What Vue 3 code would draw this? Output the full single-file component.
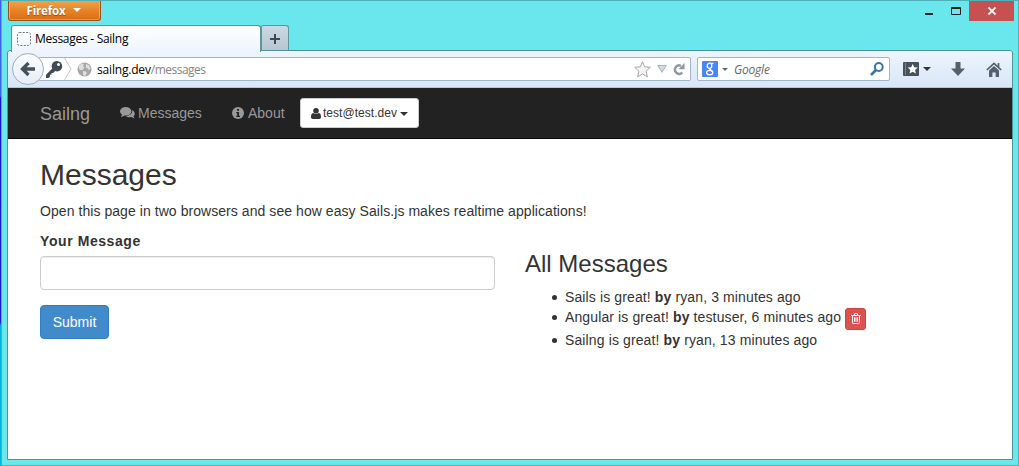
<script setup>
import { ref } from 'vue'

const draft = ref('')
const messages = [
  { text: 'Sails is great!', user: 'ryan', when: '3 minutes ago', own: false },
  { text: 'Angular is great!', user: 'testuser', when: '6 minutes ago', own: true },
  { text: 'Sailng is great!', user: 'ryan', when: '13 minutes ago', own: false },
]
</script>

<template>
  <div class="desktop">
    <div class="window">
      <div class="titlebar">
        <div class="ff-button"><span>Firefox</span><i class="ff-caret"></i></div>
        <div class="controls">
          <svg class="min" width="8" height="13"><rect y="11" width="8" height="2" fill="#222" /></svg>
          <svg class="max" width="10" height="8"><path d="M.5 .5h9v7h-9z M0 1.5h10" fill="none" stroke="#222" /></svg>
          <div class="close">
            <svg width="8" height="8" viewBox="0 0 8 8"><path d="M.5 .5l7 7M7.500 .5l-7 7" stroke="#fff" stroke-width="1.8" /></svg>
          </div>
        </div>
      </div>

      <div class="tabs">
        <div class="tab">
          <svg width="14" height="14"><rect x=".5" y=".5" width="13" height="13" rx="2" fill="none" stroke="#6f777f" stroke-dasharray="2 1.300" /></svg>
          <span>Messages - Sailng</span>
        </div>
        <div class="new-tab">
          <svg width="10" height="10"><path d="M5 0v10M0 5h10" stroke="#3d4853" stroke-width="2" /></svg>
        </div>
      </div>

      <div class="client">
        <div class="toolbar">
          <div class="back">
            <svg width="16" height="16" viewBox="0 0 16 16"><path d="M8.500 2L2.500 8l6 6M3 8H15" fill="none" stroke="#46515d" stroke-width="3.300" /></svg>
          </div>
          <div class="urlbar">
            <svg class="key" width="17" height="17" viewBox="0 0 17 17">
              <path d="M11 0a5.200 5.200 0 0 1 5.200 5.200c0 3-2.400 5.200-5.200 5.200-.7 0-1.200-.1-1.800-.3L7 12H5.500v1.800H4v1.700L2.500 17H0v-3.200l6.200-6.400A5.200 5.200 0 0 1 11 0z" fill="#434b55" />
              <circle cx="12.500" cy="3.600" r="1.500" fill="#fff" />
            </svg>
            <svg class="chevron" width="8" height="22" viewBox="0 0 8 22"><path d="M.5 0L7 11L.5 22" fill="none" stroke="#c3c6cb" /></svg>
            <svg class="globe" width="15" height="15" viewBox="0 0 15 15">
              <circle cx="7.500" cy="7.500" r="7" fill="#a6a6a6" />
              <path d="M2 3.500l3-2 2 1-1 2 1.500 1-2 2.500H3L1.500 6zM9 2l3 1.200 1.500 3-1.500 2-1.500-2-1.700-.6zM6 9l3 .5 1 1.500-2 3-2-1z" fill="#dedede" />
            </svg>
            <span class="url"><b>sailng.dev</b>/messages</span>
            <svg class="star" width="17" height="17" viewBox="0 0 17 17"><path d="M8.500 .7l2.200 5.100 5.600.5-4.200 3.900 1.300 5.700-4.900-3-4.900 3 1.300-5.700L.7 6.300l5.600-.5z" fill="#f4f4f4" stroke="#a4a7aa" /></svg>
            <svg class="drop" width="10" height="8" viewBox="0 0 10 8"><path d="M.8 .5h8.400L5 7.300z" fill="#d3dae2" stroke="#a9b1ba" /></svg>
            <svg class="reload" width="12" height="13" viewBox="0 0 12 13"><path d="M8 2.800A4.200 4.200 0 1 0 9.300 9.500" fill="none" stroke="#8d98a5" stroke-width="2.500" /><path d="M11.500 0v6.300H5.500z" fill="#8d98a5" /></svg>
          </div>
          <div class="search">
            <svg class="google" width="16" height="16" viewBox="0 0 16 16">
              <rect width="16" height="16" rx="1" fill="#4a86f0" />
              <g fill="none" stroke="#fff" stroke-width="1.300">
                <ellipse cx="7.500" cy="4.800" rx="2.300" ry="2.600" />
                <path d="M8 2.300h3.500M8.200 7.300c-2.200 1 1.800 1.500 2.200 3.400" />
                <ellipse cx="7.700" cy="11.600" rx="3.100" ry="2.200" />
              </g>
            </svg>
            <i class="caret small"></i>
            <em>Google</em>
            <svg class="lens" width="14" height="14" viewBox="0 0 14 14"><circle cx="8.800" cy="5" r="3.900" fill="none" stroke="#3973ad" stroke-width="2" /><path d="M6 8L1 13" stroke="#3973ad" stroke-width="2.600" /></svg>
          </div>
          <svg class="bookmark" width="16" height="14" viewBox="0 0 16 14"><rect width="16" height="14" rx="1" fill="#48515b" /><path d="M2.500 1v12" stroke="#79828c" /><path d="M9.700 2l1.500 3.300 3.500.3-2.600 2.400.8 3.600-3.200-1.900-3.200 1.900.8-3.600-2.600-2.400 3.500-.3z" fill="#fff" /></svg>
          <i class="caret nav-caret"></i>
          <svg class="download" width="14" height="14" viewBox="0 0 14 14"><path d="M4.500 0h5v6.500H14L7 14 0 6.500h4.500z" fill="#56606b" /></svg>
          <svg class="home" width="16" height="15" viewBox="0 0 16 15"><path d="M.8 8L8 1.300 15.200 8M12.500 1v4" fill="none" stroke="#56606b" stroke-width="1.700" /><path d="M3 8.500L8 3.900l5 4.600V15H9.600v-4.500H6.400V15H3z" fill="#56606b" /></svg>
        </div>

        <nav class="navbar">
          <a class="brand">Sailng</a>
          <a class="link messages-link">
            <svg width="15" height="12" viewBox="0 0 15 12"><ellipse cx="5.700" cy="4.300" rx="5.700" ry="4.300" fill="#999" /><path d="M2 7l-.8 3.300L5 8.300zM12.300 3c2.600 1.400 3.400 4.500 1.200 6.200l1 2.300-3.300-1.400c-2.100.4-4.200-.1-5.500-1.100 4-.1 6.900-2.300 6.600-6z" fill="#999" /></svg>
            <span>Messages</span>
          </a>
          <a class="link about-link">
            <svg width="12" height="12" viewBox="0 0 12 12"><circle cx="6" cy="6" r="6" fill="#999" /><path d="M5 2h2v1.800H5zM4.200 5H7v3.700h1V10H4.200V8.700h1V6.300h-1z" fill="#222" /></svg>
            <span>About</span>
          </a>
          <button class="user">
            <svg width="10" height="11" viewBox="0 0 10 11"><circle cx="5" cy="2.800" r="2.800" fill="#333" /><path d="M2.200 5c1.700 1.400 3.900 1.400 5.600 0C9.500 5.300 10 7 10 9c0 1.200-.7 2-1.700 2H1.700C.7 11 0 10.200 0 9c0-2 .5-3.700 2.200-4z" fill="#333" /></svg>
            <span>test@test.dev</span><i class="caret user-caret"></i>
          </button>
        </nav>

        <main class="page">
          <h2>Messages</h2>
          <p>Open this page in two browsers and see how easy Sails.js makes realtime applications!</p>
          <div class="row">
            <form class="col" @submit.prevent>
              <label for="message">Your Message</label>
              <input id="message" v-model="draft" type="text" />
              <button class="submit">Submit</button>
            </form>
            <section class="col">
              <h3>All Messages</h3>
              <ul>
                <li v-for="m in messages" :key="m.when">
                  {{ m.text }} <b>by</b> {{ m.user }}, {{ m.when }}
                  <button v-if="m.own" class="trash" aria-label="Delete">
                    <svg width="10" height="11" viewBox="0 0 10 11"><path d="M0 2.500h10M3.200 2.300L3.700 .6h2.600l.5 1.700M1.500 2.500v7.300q0 .7.700.7h5.600q.7 0 .7-.7V2.500M3.500 4.300v4.400M5 4.300v4.400M6.500 4.300v4.400" fill="none" stroke="#fff" stroke-width="1" /></svg>
                  </button>
                </li>
              </ul>
            </section>
          </div>
        </main>
      </div>
    </div>
  </div>
</template>

<style>
body { margin: 0; overflow: hidden; }
</style>

<style scoped>
* { box-sizing: border-box; }
svg { display: block; flex: none; }
.desktop {
  width: 1019px; height: 466px; padding-left: 1px;
  background: linear-gradient(#3b63e6 0, #3b63e6 96px, #1515d0 98px, #1a1ad8 322px, #00b4d4 326px);
}
.window {
  height: 466px; display: flex; flex-direction: column;
  background: #6ae7ec; border: 1px solid #50b0b5; padding: 0 5px 5px;
}
.titlebar { height: 24px; display: flex; justify-content: space-between; align-items: flex-start; }
.ff-button {
  width: 93px; height: 20px; margin-left: 1px; display: flex; align-items: center; justify-content: center; gap: 7px;
  background: linear-gradient(#efa447, #e68328 50%, #d96d13); border: 1px solid #9c4f16; border-top: 0;
  border-radius: 0 0 3px 3px; box-shadow: inset 0 -1px #ee9447, inset 1px 0 #f0ab62, inset -1px 0 #f0ab62;
  color: #fff; font: bold 11.500px/18px "Open Sans", sans-serif; letter-spacing: -.15px; text-shadow: 0 1px 1px #8e4a1a;
  padding-right: 2px;
}
.ff-button span { padding-top: 1px; }
.ff-caret { border: 4px solid transparent; border-top-color: #fff; border-bottom: 0; margin-top: -1px; }
.controls { display: flex; margin-right: -1px; }
.min { margin: 1px 18px 0 0; }
.max { margin: 6px 8px 0 0; }
.close { width: 45px; height: 20px; display: flex; align-items: center; justify-content: center; background: #c75050; }
.tabs { height: 25px; display: flex; padding-left: 4px; font: 12px/16px "Open Sans", sans-serif; }
.tab {
  width: 250px; height: 27px; display: flex; align-items: center; gap: 4px; padding-left: 5px; z-index: 1;
  background: linear-gradient(#fff, #edf4fd); border: 1px solid #58979b; border-bottom: 0; border-radius: 3px 3px 0 0;
}
.tab span { color: #000; letter-spacing: -.28px; }
.new-tab {
  width: 28px; height: 25px; display: flex; align-items: center; justify-content: center; padding-top: 2px;
  background: linear-gradient(#ccd9e3, #b9c6d1); border: 1px solid #58979b; border-bottom: 0; border-radius: 2px 3px 0 0;
}
.client { flex: 1; display: flex; flex-direction: column; background: #fff; border: 1px solid #4b9699; border-radius: 3px 3px 0 0; }
.toolbar {
  height: 37px; display: flex; align-items: center; padding-left: 4px;
  background: linear-gradient(#eef5fd, #d8e6f7); border-bottom: 1px solid #b1c4dc; border-radius: 3px 3px 0 0;
}
.back {
  width: 32px; height: 32px; display: flex; align-items: center; justify-content: center; z-index: 1;
  background: linear-gradient(#fcfdff, #e5edf8); border: 1px solid #9daec2; border-radius: 50%;
}
.urlbar, .search { height: 24px; display: flex; align-items: center; background: #fff; border: 1px solid #a4b5ca; border-radius: 2px; }
.urlbar { width: 653px; margin-left: -6px; padding-left: 8px; border-left: 0; }
.chevron { margin-left: 1px; }
.globe { margin: 0 5px 0 5px; }
.url { flex: 1; padding-top: 2px; font: 12px/16px "Open Sans", sans-serif; color: #858585; letter-spacing: -.5px; }
.url b { font-weight: 400; color: #000; letter-spacing: -.18px; }
.drop { margin: 0 6px 0 6px; }
.reload { margin-right: 5px; }
.search { width: 193px; margin-left: 6px; padding: 0 5px 0 4px; }
.search em { flex: 1; margin-left: 6px; padding-top: 2px; color: #666; font: italic 12px/16px "Open Sans", sans-serif; letter-spacing: -.2px; }
.caret { width: 0; height: 0; flex: none; border: 4px solid transparent; border-top-color: #2f3742; border-bottom: 0; }
.small { margin-left: 4px; border-width: 3px 3px 0; border-top-color: #626970; }
.bookmark { margin-left: 13px; }
.nav-caret { margin-left: 4px; }
.download { margin-left: 20px; }
.home { margin-left: 21px; }
.navbar {
  height: 51px; display: flex; align-items: center; padding-left: 32px; background: #222; border-bottom: 1px solid #080808;
  color: #999; font: 14px/20px "Liberation Sans", Arial, sans-serif;
}
.brand { width: 80px; font-size: 18px; line-height: 20px; padding-top: 1px; }
.link { display: flex; align-items: center; gap: 3px; }
.messages-link { width: 112px; }
.about-link { width: 68px; gap: 4px; }
button { font-family: "Liberation Sans", Arial, sans-serif; }
.user {
  width: 119px; height: 30px; display: flex; align-items: center; padding: 0 0 0 10px; background: #fff;
  border: 1px solid #ccc; border-radius: 3px; color: #333; font-size: 12px;
}
.user span { margin-left: 2px; letter-spacing: .03px; }
.user-caret { margin: 2px 0 0 3px; border-top-color: #333; }
.page { padding: 19px 32px 0; color: #333; font: 14px/20px "Liberation Sans", Arial, sans-serif; }
h2, h3 { font-weight: 400; line-height: 1.1; margin: 0 0 10px; }
h2 { font-size: 30px; }
p { margin: 0 0 10px; letter-spacing: .06px; }
.row { display: grid; grid-template-columns: 455px 455px; gap: 30px; }
label { display: block; font-weight: 700; margin-bottom: 5px; letter-spacing: .58px; }
input {
  display: block; width: 100%; height: 34px; margin-bottom: 15px; border: 1px solid #ccc; border-radius: 4px;
  box-shadow: inset 0 1px 1px rgba(0, 0, 0, .075); background: #fff;
}
.submit { display: block; width: 69px; height: 34px; padding: 0; background: #428bca; border: 1px solid #357ebd; border-radius: 4px; color: #fff; font-size: 14px; }
h3 { font-size: 24px; margin-top: 20px; }
ul { margin: 0; padding-left: 40px; letter-spacing: .12px; list-style: none; }
li::before {
  content: ""; display: inline-block; width: 5px; height: 5px; margin: 0 8px 0 -13px;
  border-radius: 50%; background: #333; vertical-align: 2px;
}
.trash {
  display: inline-flex; align-items: center; justify-content: center; width: 21px; height: 22px; padding: 0;
  vertical-align: middle; background: #d9534f; border: 1px solid #d43f3a; border-radius: 3px;
}
</style>
